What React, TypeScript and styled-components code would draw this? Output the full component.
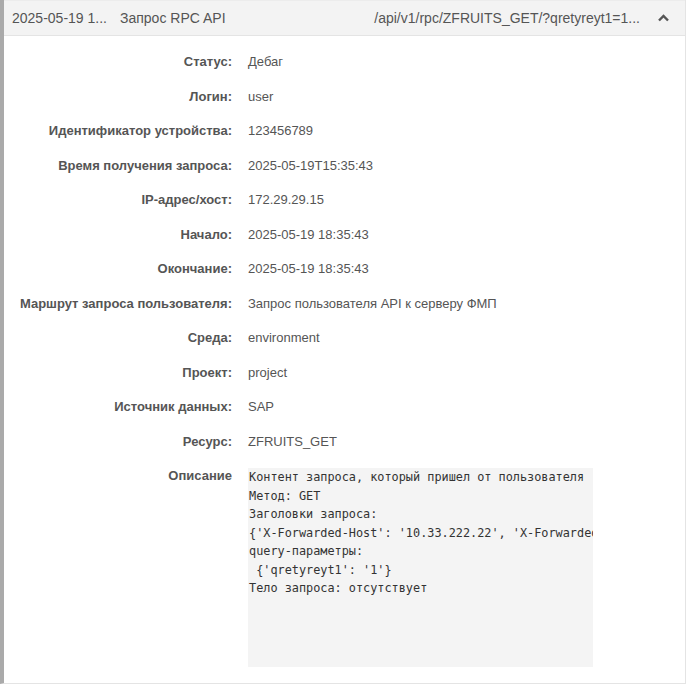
import { Fragment } from "react";
import styled, { createGlobalStyle } from "styled-components";

const GlobalStyle = createGlobalStyle`
  html, body {
    margin: 0;
    padding: 0;
    background: #fff;
  }
  body {
    font-family: "Liberation Sans", Arial, sans-serif;
    color: #555;
  }
`;

const Panel = styled.div`
  width: 686px;
  height: 684px;
  box-sizing: border-box;
  border-left: 4px solid #aaa;
  border-right: 1px solid #e4e4e4;
  border-bottom: 1px solid #e4e4e4;
  display: flex;
  flex-direction: column;
`;

const Header = styled.div`
  height: 36px;
  box-sizing: border-box;
  background: #f3f3f3;
  border-top: 1px solid #ececec;
  border-bottom: 1px solid #e4e4e4;
  display: flex;
  align-items: center;
  padding: 0 16px 0 8px;
  font-size: 14px;
  color: #555;
`;

const HeaderCell = styled.span<{ $width?: number; $grow?: boolean }>`
  white-space: nowrap;
  overflow: hidden;
  text-overflow: ellipsis;
  ${(p) => (p.$width ? `width: ${p.$width}px; flex: none;` : "")}
  ${(p) => (p.$grow ? "flex: 1; text-align: right; padding-right: 18px;" : "")}
`;

const Chevron = styled.svg`
  width: 11px;
  height: 8px;
  flex: none;
`;

const Body = styled.div`
  display: grid;
  grid-template-columns: 228px 1fr;
  column-gap: 16px;
  row-gap: 14.5px;
  padding-top: 16px;
  font-size: 13px;
  line-height: 20px;
`;

const Label = styled.div`
  font-weight: bold;
  text-align: right;
  color: #555;
`;

const Value = styled.div`
  color: #555;
`;

const Code = styled.pre`
  margin: 2px 0 0;
  width: 345px;
  height: 199px;
  box-sizing: border-box;
  padding: 0 1px;
  background: #f4f4f4;
  font-family: "DejaVu Sans Mono", "Liberation Mono", monospace;
  font-size: 11.85px;
  line-height: 18.5px;
  color: #333;
  overflow: hidden;
  white-space: pre;
`;

const rows: [string, string][] = [
  ["Статус:", "Дебаг"],
  ["Логин:", "user"],
  ["Идентификатор устройства:", "123456789"],
  ["Время получения запроса:", "2025-05-19T15:35:43"],
  ["IP-адрес/хост:", "172.29.29.15"],
  ["Начало:", "2025-05-19 18:35:43"],
  ["Окончание:", "2025-05-19 18:35:43"],
  ["Маршрут запроса пользователя:", "Запрос пользователя API к серверу ФМП"],
  ["Среда:", "environment"],
  ["Проект:", "project"],
  ["Источник данных:", "SAP"],
  ["Ресурс:", "ZFRUITS_GET"],
];

const description = [
  "Контент запроса, который пришел от пользователя",
  "Метод: GET",
  "Заголовки запроса:",
  "{'X-Forwarded-Host': '10.33.222.22', 'X-Forwarded-For': '10.33.222.22'}",
  "query-параметры:",
  " {'qretyreyt1': '1'}",
  "Тело запроса: отсутствует",
].join("\n");

export default function App() {
  return (
    <>
      <GlobalStyle />
      <Panel>
        <Header>
          <HeaderCell $width={108}>2025-05-19 1...</HeaderCell>
          <HeaderCell>Запрос RPC API</HeaderCell>
          <HeaderCell $grow>/api/v1/rpc/ZFRUITS_GET/?qretyreyt1=1...</HeaderCell>
          <Chevron viewBox="0 0 11 8">
            <path d="M1 6.5 L5.5 2 L10 6.5" fill="none" stroke="#555" strokeWidth="2.4" />
          </Chevron>
        </Header>
        <Body>
          {rows.map(([label, value]) => (
            <Fragment key={label}>
              <Label>{label}</Label>
              <Value>{value}</Value>
            </Fragment>
          ))}
          <Label>Описание</Label>
          <Code>{description}</Code>
        </Body>
      </Panel>
    </>
  );
}
